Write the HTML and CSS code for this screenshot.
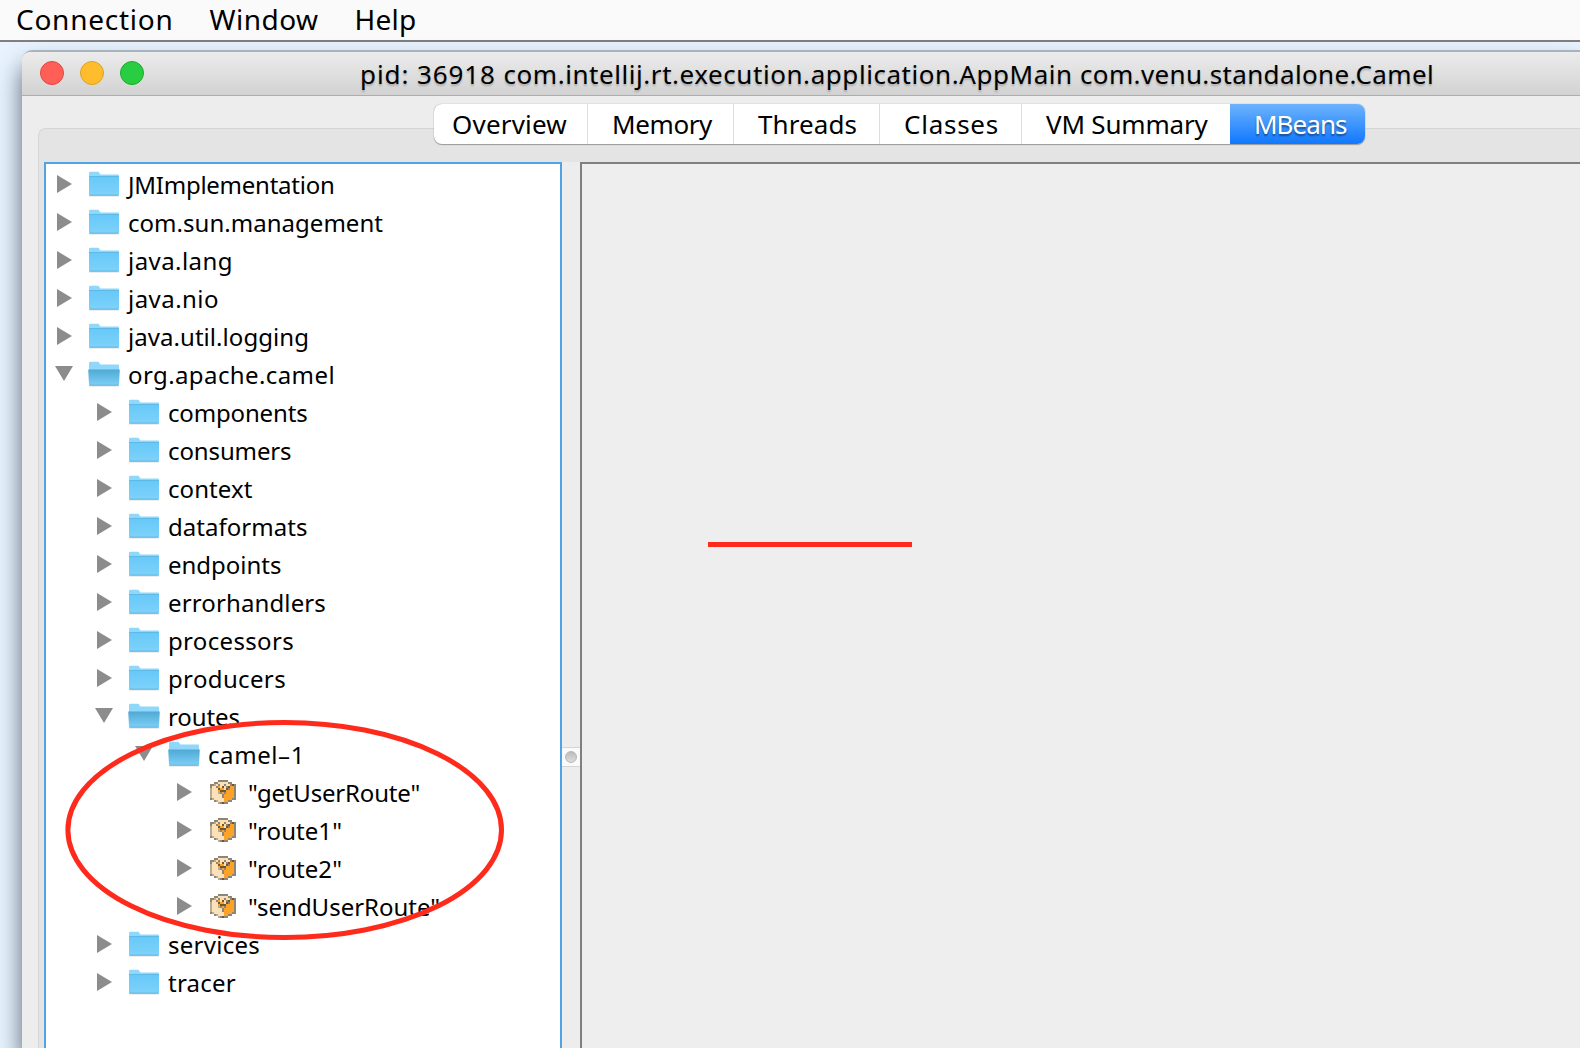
FILE: index.html
```html
<!DOCTYPE html>
<html lang="en">
<head>
<meta charset="utf-8">
<title>Java Monitoring Console</title>
<link rel="stylesheet" href="styles.css">
</head>
<body>
<svg class="defs" width="0" height="0" aria-hidden="true">
  <defs>
    <linearGradient id="gFront" x1="0" y1="0" x2="0" y2="1"><stop offset="0" stop-color="#67c8f8"/><stop offset="1" stop-color="#7dd2fa"/></linearGradient>
    <linearGradient id="gOpen" x1="0" y1="0" x2="0" y2="1"><stop offset="0" stop-color="#4fa9d2"/><stop offset="1" stop-color="#7dd0f8"/></linearGradient>
    <symbol id="folder" viewBox="0 0 32 28">
      <path d="M1 25.5h30v1H1z" fill="#d5d9dc"/>
      <path d="M1 3q0-1.3 1.3-1.3h7.5q1 0 1.6 1.2l.6 1.1q.3.6 1.2.6H30q1 0 1 1V25H1z" fill="#8fd8fc"/>
      <path d="M1 6.2h30V24.5q0 1-1 1H2q-1 0-1-1z" fill="url(#gFront)"/>
      <path d="M1 6.5h30" stroke="#58b4df" stroke-width=".8"/>
      <path d="M1.5 25.2h29" stroke="#5aa6c9" stroke-width=".8"/>
    </symbol>
    <symbol id="folder-open" viewBox="0 0 32 28">
      <path d="M1 25.5h30v1H1z" fill="#d5d9dc"/>
      <path d="M1 3q0-1.3 1.3-1.3h7.5q1 0 1.6 1.2l.6 1.1q.3.6 1.2.6H30q1 0 1 1V25H1z" fill="#8fd8fc"/>
      <path d="M.2 9.5h31.6l-.8 15q0 1-1 1H2q-1 0-1-1z" fill="url(#gOpen)"/>
      <path d="M1.5 25.2h29" stroke="#5aa6c9" stroke-width=".8"/>
    </symbol>
    <symbol id="bean" viewBox="0 0 13 12"></symbol>
  </defs>
</svg>
<header class="menubar"><span class="m1">Connection</span><span class="m2">Window</span><span class="m3">Help</span></header>
<main class="window">
  <div class="titlebar"><div class="lights"><i class="red"></i><i class="amber"></i><i class="green"></i></div><h1><span class="w1">pid: 36918 </span><span class="w2">com.intellij.rt.execution.application.AppMain </span><span class="w3">com.venu.standalone.Camel</span></h1></div>
  <nav class="tabs"><span class="t1">Overview</span><span class="t2">Memory</span><span class="t3">Threads</span><span class="t4">Classes</span><span class="t5">VM Summary</span><span class="t6">MBeans</span></nav>
  <section class="group">
    <ul class="tree" id="tree"></ul>
    <div class="splitter"><div class="grip"><i></i></div></div>
    <div class="detail"></div>
  </section>
</main>
<svg class="marks" width="1580" height="1048" viewBox="0 0 1580 1048"><ellipse cx="284.7" cy="830" rx="216.8" ry="107.5"/><path d="M708 544.5H912"/></svg>
<script src="tree.js"></script>
</body>
</html>
```
FILE: tree.js
```js
// Pixel rows of the MBean icon; each letter is a colour.
const beanRows = [
  '....ggggg....',
  '..ggcccccgg..',
  'gglcgccgccgdg',
  'gccgocdcgdoog',
  'lcccdoocdgoog',
  'lcccodddoooog',
  'lccclgogoooog',
  'lcccccgooooog',
  'lcccccgooooog',
  'glcccccoooogg',
  '..glcccoogg..',
  '....lgdgg....'
];
const colours = { g: '#8d8577', l: '#b9aa90', c: '#fbe1b9', o: '#fca226', d: '#70552f' };
document.getElementById('bean').innerHTML = Object.entries(colours).map(([key, fill]) => {
  let d = '';
  beanRows.forEach((row, y) => [...row].forEach((c, x) => { if (c === key) d += `M${x} ${y}h1v1h-1z`; }));
  return `<path fill="${fill}" d="${d}" shape-rendering="crispEdges"/>`;
}).join('');

// [depth, state, label, label width]
const rows = [
  [0, 'c', 'JMImplementation', 206.5], [0, 'c', 'com.sun.management', 255], [0, 'c', 'java.lang', 105],
  [0, 'c', 'java.nio', 91], [0, 'c', 'java.util.logging', 181], [0, 'o', 'org.apache.camel', 207],
  [1, 'c', 'components', 139.5], [1, 'c', 'consumers', 123.5], [1, 'c', 'context', 84.5],
  [1, 'c', 'dataformats', 139.5], [1, 'c', 'endpoints', 113.5], [1, 'c', 'errorhandlers', 158],
  [1, 'c', 'processors', 126], [1, 'c', 'producers', 118], [1, 'o', 'routes', 72],
  [2, 'o', 'camel\u20131', 97], [3, 'b', '"getUserRoute"', 172], [3, 'b', '"route1"', 94],
  [3, 'b', '"route2"', 94], [3, 'b', '"sendUserRoute"', 192], [1, 'c', 'services', 92], [1, 'c', 'tracer', 68]
];
const icons = { c: 'folder', o: 'folder-open', b: 'bean' };
const tree = document.getElementById('tree');
for (const [depth, state, label, width] of rows) {
  const li = document.createElement('li');
  li.className = 'd' + depth;
  li.innerHTML = `<i class="arrow ${state === 'o' ? 'down' : ''}"></i><svg class="icon ${icons[state]}"><use href="#${icons[state]}"/></svg><span></span>`;
  tree.append(li);
  fit(li.lastChild, label, width);
}
function fit(el, text, width) {
  el.textContent = text;
  const natural = el.getBoundingClientRect().width;
  el.style.letterSpacing = (width - natural) / text.length + 'px';
}
const fixed = { '.m1': 157.5, '.m2': 109, '.m3': 62, '.w1': 143.5, '.w2': 576.5, '.w3': 354, '.t1': 115, '.t2': 100, '.t3': 99, '.t4': 95, '.t5': 161.5, '.t6': 92.5 };
for (const [sel, width] of Object.entries(fixed)) {
  const el = document.querySelector(sel);
  const inner = document.createElement('b');
  const text = el.textContent;
  el.textContent = '';
  el.append(inner);
  fit(inner, text, width);
}
```
FILE: styles.css
```css
* { box-sizing: border-box; }
body { margin: 0; width: 1580px; height: 1048px; overflow: hidden; background: #e8f3ff; color: #000; font-family: "Noto Sans", sans-serif; display: flex; flex-direction: column; }
.defs { position: absolute; }
b, h1 { font-weight: 400; }
b { white-space: pre; }
.menubar { flex: none; height: 42px; background: #fafafa; border-bottom: 2px solid #7f7f7f; padding-left: 16px; display: flex; gap: 36px; font-size: 28px; line-height: 38px; white-space: nowrap; }
.window { flex: 1; margin: 8px 0 0 22px; border-top: 2px solid #a9b3bd; border-radius: 10px 0 0 0; background: #ededed; box-shadow: 0 16px 24px rgba(40,50,65,.75); display: flex; flex-direction: column; min-height: 0; }
.titlebar { flex: none; height: 44px; border-radius: 8px 0 0 0; border-bottom: 1px solid #adadad; background: linear-gradient(#ececec, #d2d2d2); display: flex; align-items: center; }
.lights { display: flex; gap: 16px; padding: 0 0 1px 18px; width: 338px; }
.lights i { width: 24px; height: 24px; border-radius: 50%; border: 1px solid; }
.lights .red { background: #ff5f57; border-color: #e2463f; }
.lights .amber { background: #ffbd2e; border-color: #dfa023; }
.lights .green { background: #28cd41; border-color: #1aab29; }
h1 { margin: 0; font-size: 26px; line-height: 40px; white-space: nowrap; text-shadow: 0 2px 2px rgba(0,0,0,.22); }
.tabs { flex: none; z-index: 1; align-self: flex-start; margin: 8px 0 0 412px; height: 40px; display: flex; font-size: 26px; line-height: 40px; border-radius: 8px; box-shadow: 0 1px 1px #999, 0 0 1px #888; background: #fff; white-space: nowrap; }
.tabs span { height: 40px; border-right: 1px solid #ddd; padding-left: 24px; }
.tabs .t1 { width: 154px; padding-left: 18px; }
.tabs .t2 { width: 146px; }
.tabs .t3 { width: 146px; }
.tabs .t4 { width: 142px; }
.tabs .t5 { width: 208px; border: 0; }
.tabs .t6 { width: 135px; border: 0; border-radius: 0 8px 8px 0; background: linear-gradient(#6db3fc, #1077ff); color: #fff; text-shadow: 0 2px 2px rgba(0,0,0,.45); }
.group { flex: 1; min-height: 0; margin: -16px 0 0 16px; padding: 33px 0 0 5px; border: solid #d5d5d5; border-width: 1px 0 0 1px; border-radius: 8px 0 0 0; background: #e4e4e4; display: flex; }
.tree { margin: 0; padding: 2px 0 0 10px; width: 518px; border: 2px solid #52a3e4; border-bottom: 0; background: #fff; list-style: none; overflow: hidden; }
.tree li { height: 38px; display: flex; align-items: center; font-size: 24px; line-height: 38px; white-space: nowrap; }
.tree .d1 { padding-left: 40px; }
.tree .d2 { padding-left: 80px; }
.tree .d3 { padding-left: 120px; }
.arrow { flex: none; width: 15px; height: 18px; margin: 0 16px 2px 1px; background: #8c8c8c; clip-path: polygon(0 0, 100% 50%, 0 100%); }
.arrow.down { width: 18px; height: 15px; margin: 0 15px 3px -1px; clip-path: polygon(0 0, 100% 0, 50% 100%); }
.icon { flex: none; width: 32px; height: 28px; margin: 0 8px 2px 0; }
.icon.bean { width: 26px; height: 24px; margin: 0 12px 2px 2px; }
.splitter { width: 18px; background: #ededed; padding-top: 585px; }
.grip { height: 20px; background: #fafafa; border: solid #d5d5d5; border-width: 1px 0; display: flex; align-items: center; justify-content: center; }
.grip i { width: 12px; height: 12px; border-radius: 50%; background: linear-gradient(#bbb, #ddd); border: 1px solid #b8b8b8; }
.detail { flex: 1; border: solid #7f7f7f; border-width: 2px 0 0 2px; background: #eee; }
.marks { position: absolute; left: 0; top: 0; fill: none; stroke: #fe2b1c; stroke-width: 5; z-index: 2; }
```
